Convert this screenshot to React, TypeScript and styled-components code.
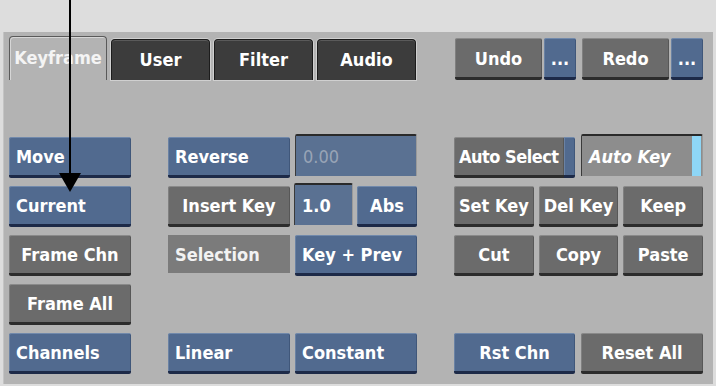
import * as React from 'react';
import styled, { createGlobalStyle, css } from 'styled-components';

type Tone = 'blue' | 'grey';
type Align = 'left' | 'center';

const GlobalStyle = createGlobalStyle`
  html, body {
    margin: 0;
    padding: 0;
    background: #dddddd;
  }
  body {
    font-family: "DejaVu Sans Condensed", "DejaVu Sans", sans-serif;
    font-stretch: condensed;
    font-weight: bold;
    font-size: 18px;
  }
`;

const Page = styled.div`
  position: relative;
  width: 716px;
  height: 386px;
  background: #dddddd;
  overflow: hidden;
`;

const Panel = styled.div`
  margin: 32px 0 0 3px;
  width: 710px;
  height: 352px;
  background: #b3b3b3;
  box-shadow: inset 1px 0 0 #c4c4c4;
  display: flex;
  flex-direction: column;
`;

const TopBar = styled.div`
  height: 48px;
  padding: 0 10px 0 6px;
  display: flex;
  justify-content: space-between;
  align-items: flex-end;
`;

const Tabs = styled.div`
  display: flex;
  align-items: flex-end;
  gap: 4px;
  height: 100%;
`;

const Tab = styled.div<{ $active?: boolean }>`
  box-sizing: border-box;
  width: 99px;
  display: flex;
  align-items: center;
  justify-content: center;
  color: #ffffff;
  border-radius: 4px 4px 0 0;
  ${(p) =>
    p.$active
      ? css`
          height: 44px;
          width: 98px;
          background: #b3b3b3;
          border: 1px solid #5a5a5a;
          border-bottom: none;
          box-shadow: inset 1px 1px 0 #d6d6d6;
          color: #f4f4f4;
          padding-bottom: 2px;
        `
      : css`
          height: 41px;
          background: #3c3c3c;
          border: 1px solid #1c1c1c;
          border-bottom: none;
          box-shadow: 0 0 0 1px #d0d0d0, inset 0 1px 0 #5a5a5a;
          padding-bottom: 2px;
        `}
`;

const History = styled.div`
  display: flex;
  gap: 6px;
  height: 42px;
`;

const HistoryPair = styled.div`
  display: flex;
  gap: 2px;
`;

const toneStyles = {
  blue: css`
    background: #516a8f;
    border-top: 1px solid #7189ab;
    border-bottom: 3px solid #1d2a48;
    box-shadow: inset 1px 0 0 #6a82a4, inset -1px 0 0 #40577a;
  `,
  grey: css`
    background: #6b6b6b;
    border-top: 1px solid #8a8a8a;
    border-bottom: 3px solid #2c2c2c;
    box-shadow: inset 1px 0 0 #808080, inset -1px 0 0 #575757;
  `,
};

const Button = styled.div<{ $tone: Tone; $align?: Align; $width?: number }>`
  box-sizing: border-box;
  height: 41px;
  ${(p) => (p.$width ? `width: ${p.$width}px;` : 'flex: 1;')}
  min-width: 0;
  display: flex;
  align-items: center;
  justify-content: ${(p) => (p.$align === 'left' ? 'flex-start' : 'center')};
  padding: 0 ${(p) => (p.$align === 'left' ? '7px' : '0')};
  border-radius: 2px;
  color: #ffffff;
  white-space: nowrap;
  ${(p) => toneStyles[p.$tone]}
`;

const HistoryButton = styled(Button)`
  height: 42px;
`;

const Label = styled.div`
  box-sizing: border-box;
  flex: 1;
  height: 38px;
  display: flex;
  align-items: center;
  padding: 0 7px;
  background: #7b7b7b;
  color: #f2f2f2;
`;

const Field = styled.div<{ $tone: Tone; $dim?: boolean; $width?: number }>`
  box-sizing: border-box;
  position: relative;
  height: 42px;
  margin-top: -3px;
  ${(p) => (p.$width ? `width: ${p.$width}px;` : 'flex: 1;')}
  display: flex;
  align-items: center;
  padding: 0 7px;
  border-top: 2px solid #2a2a2a;
  border-left: 1px solid #3a3a3a;
  border-right: 1px solid #9a9a9a;
  border-radius: 2px 2px 0 0;
  background: ${(p) => (p.$tone === 'blue' ? '#5a7192' : '#8d8d8d')};
  color: ${(p) => (p.$dim ? '#98a4b6' : '#ffffff')};
  font-weight: ${(p) => (p.$dim ? 'normal' : 'bold')};
`;

const ItalicText = styled.span`
  font-style: italic;
`;

const Indicator = styled.span`
  position: absolute;
  top: 0;
  right: 1px;
  bottom: 0;
  width: 9px;
  background: #8ed6f6;
`;

const Grid = styled.div`
  margin-top: 57px;
  padding-left: 6px;
  display: grid;
  grid-template-columns: 122px 249px 249px;
  grid-template-rows: repeat(5, 41px);
  column-gap: 37px;
  row-gap: 8px;
`;

const Cell = styled.div<{ $col: number; $row: number; $gap?: number }>`
  grid-column: ${(p) => p.$col};
  grid-row: ${(p) => p.$row};
  display: flex;
  align-items: flex-start;
  gap: ${(p) => p.$gap ?? 5}px;
`;

const Split = styled.div`
  display: flex;
  width: 121px;
  height: 41px;
`;

const SplitMain = styled(Button)`
  border-radius: 2px 0 0 2px;
  padding: 0 5px;
  letter-spacing: -0.5px;
`;

const SplitStrip = styled.div`
  box-sizing: border-box;
  width: 11px;
  height: 41px;
  ${toneStyles.blue}
  border-radius: 0 2px 2px 0;
`;

const Pointer = styled.svg`
  position: absolute;
  left: 58px;
  top: 0;
`;

export default function App() {
  return (
    <Page>
      <GlobalStyle />
      <Panel>
        <TopBar>
          <Tabs>
            <Tab $active>Keyframe</Tab>
            <Tab>User</Tab>
            <Tab>Filter</Tab>
            <Tab>Audio</Tab>
          </Tabs>
          <History>
            <HistoryPair>
              <HistoryButton $tone="grey" $width={87}>Undo</HistoryButton>
              <HistoryButton $tone="blue" $width={32}>...</HistoryButton>
            </HistoryPair>
            <HistoryPair>
              <HistoryButton $tone="grey" $width={87}>Redo</HistoryButton>
              <HistoryButton $tone="blue" $width={32}>...</HistoryButton>
            </HistoryPair>
          </History>
        </TopBar>

        <Grid>
          <Cell $col={1} $row={1}>
            <Button $tone="blue" $align="left">Move</Button>
          </Cell>
          <Cell $col={1} $row={2}>
            <Button $tone="blue" $align="left">Current</Button>
          </Cell>
          <Cell $col={1} $row={3}>
            <Button $tone="grey">Frame Chn</Button>
          </Cell>
          <Cell $col={1} $row={4}>
            <Button $tone="grey">Frame All</Button>
          </Cell>
          <Cell $col={1} $row={5}>
            <Button $tone="blue" $align="left">Channels</Button>
          </Cell>

          <Cell $col={2} $row={1}>
            <Button $tone="blue" $align="left" $width={122}>Reverse</Button>
            <Field $tone="blue" $dim>0.00</Field>
          </Cell>
          <Cell $col={2} $row={2} $gap={4}>
            <Button $tone="grey" $width={122}>Insert Key</Button>
            <Field $tone="blue" $width={59}>1.0</Field>
            <Button $tone="blue">Abs</Button>
          </Cell>
          <Cell $col={2} $row={3}>
            <Label>Selection</Label>
            <Button $tone="blue" $align="left" $width={122}>Key + Prev</Button>
          </Cell>
          <Cell $col={2} $row={5}>
            <Button $tone="blue" $align="left">Linear</Button>
            <Button $tone="blue" $align="left">Constant</Button>
          </Cell>

          <Cell $col={3} $row={1} $gap={6}>
            <Split>
              <SplitMain $tone="grey" $align="left">Auto Select</SplitMain>
              <SplitStrip />
            </Split>
            <Field $tone="grey">
              <ItalicText>Auto Key</ItalicText>
              <Indicator />
            </Field>
          </Cell>
          <Cell $col={3} $row={2}>
            <Button $tone="grey">Set Key</Button>
            <Button $tone="grey">Del Key</Button>
            <Button $tone="grey">Keep</Button>
          </Cell>
          <Cell $col={3} $row={3}>
            <Button $tone="grey">Cut</Button>
            <Button $tone="grey">Copy</Button>
            <Button $tone="grey">Paste</Button>
          </Cell>
          <Cell $col={3} $row={5} $gap={6}>
            <Button $tone="blue" $width={121}>Rst Chn</Button>
            <Button $tone="grey">Reset All</Button>
          </Cell>
        </Grid>
      </Panel>

      <Pointer width="24" height="194" viewBox="0 0 24 194">
        <line x1="12" y1="0" x2="12" y2="176" stroke="#000" strokeWidth="2" />
        <polygon points="1,173 23,173 12,192" fill="#000" />
      </Pointer>
    </Page>
  );
}
